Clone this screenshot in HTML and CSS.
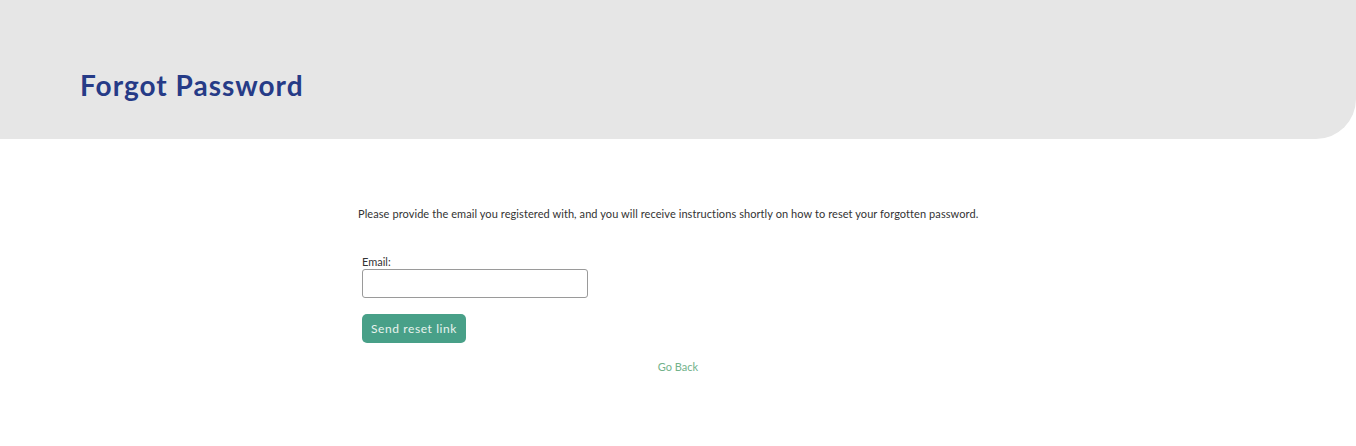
FILE: index.html
```html
<!DOCTYPE html>
<html>
<head>
<meta charset="utf-8">
<link rel="stylesheet" href="styles.css">
</head>
<body>
<header class="hero">
  <h1 class="hero-title">Forgot Password</h1>
</header>
<main class="content">
  <p class="intro">Please provide the email you registered with, and you will receive instructions shortly on how to reset your forgotten password.</p>
  <form class="form">
    <label class="label" for="email">Email:</label>
    <input class="input" id="email" type="email">
    <button class="btn" type="button">Send reset link</button>
  </form>
  <div class="back"><a class="back-link" href="#">Go Back</a></div>
</main>
</body>
</html>
```
FILE: styles.css
```css
html, body {
  margin: 0;
  padding: 0;
  background: #fff;
  font-family: Lato, "Open Sans", "Liberation Sans", sans-serif;
}
.hero {
  background: #e6e6e6;
  height: 139px;
  border-bottom-right-radius: 40px;
  padding: 0 0 0 80px;
  box-sizing: border-box;
  display: flex;
  align-items: flex-end;
}
.hero-title {
  margin: 0 0 37px 0;
  font-size: 28px;
  font-weight: 700;
  color: #263b87;
  line-height: 34px;
  letter-spacing: 1px;
}
.content {
  width: 640px;
  margin: 0 auto;
  padding-top: 67px;
}
.intro {
  margin: 0;
  font-size: 11px;
  line-height: 16px;
  color: #333;
  letter-spacing: 0.08px;
}
.form {
  padding: 33px 0 0 4px;
  display: flex;
  flex-direction: column;
  align-items: flex-start;
}
.label {
  font-size: 11px;
  line-height: 13px;
  color: #333;
}
.input {
  width: 226px;
  height: 29px;
  box-sizing: border-box;
  border: 1px solid #9a9a9a;
  border-radius: 3px;
  margin: 1px 0 0 0;
  padding: 2px 6px;
}
.btn {
  margin-top: 16px;
  width: 104px;
  height: 29px;
  background: #48a088;
  color: #e8f3ee;
  border: none;
  border-radius: 5px;
  font-family: Lato, "Open Sans", "Liberation Sans", sans-serif;
  font-size: 12px;
  letter-spacing: 0.6px;
  padding: 0;
}
.back {
  text-align: center;
  margin-top: 12px;
}
.back-link {
  font-size: 11px;
  color: #72b28a;
  text-decoration: none;
}
```
